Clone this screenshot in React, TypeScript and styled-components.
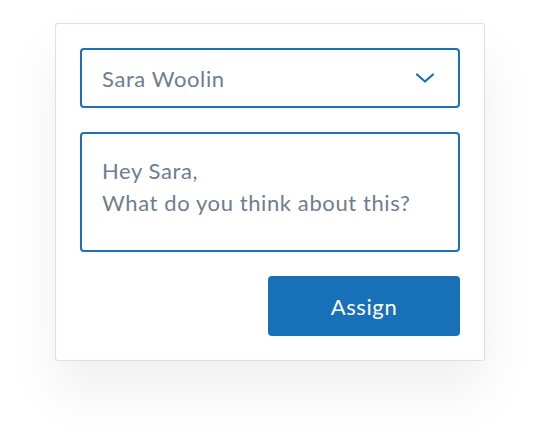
import { ReactElement } from 'react';
import styled, { createGlobalStyle } from 'styled-components';

const blue = '#1a6fb6';
const textGrey = '#6e7d90';

const GlobalStyle = createGlobalStyle`
  html, body {
    margin: 0;
    padding: 0;
    background: #ffffff;
  }
  body {
    font-family: Lato, 'Open Sans', sans-serif;
  }
`;

const Page = styled.div`
  width: 540px;
  height: 448px;
  padding: 23px 0 0 55px;
  box-sizing: border-box;
`;

const Card = styled.div`
  width: 430px;
  box-sizing: border-box;
  padding: 24px;
  display: flex;
  flex-direction: column;
  gap: 24px;
  background: #ffffff;
  border: 1px solid #e9d8e9;
  border-radius: 3px;
  box-shadow: 0 30px 55px rgba(0, 0, 0, 0.065);
`;

const Select = styled.div`
  height: 60px;
  box-sizing: border-box;
  border: 2px solid ${blue};
  border-radius: 4px;
  display: flex;
  align-items: center;
  justify-content: space-between;
  padding: 0 24px 0 20px;
  color: ${textGrey};
  font-size: 22px;
  letter-spacing: 0.6px;
`;

const Message = styled.div`
  height: 120px;
  box-sizing: border-box;
  border: 2px solid ${blue};
  border-radius: 4px;
  padding: 21px 20px;
  color: ${textGrey};
  font-size: 22px;
  line-height: 32px;
  letter-spacing: 0.6px;
`;

const Actions = styled.div`
  display: flex;
  justify-content: flex-end;
`;

const Button = styled.button`
  width: 192px;
  height: 60px;
  border: none;
  border-radius: 4px;
  background: #1870b8;
  color: #ffffff;
  font-family: inherit;
  font-size: 22px;
  letter-spacing: 0.6px;
`;

function Chevron(): ReactElement {
  return (
    <svg width="18" height="10" viewBox="0 0 18 10" fill="none">
      <path d="M1 1.5 L9 8.5 L17 1.5" stroke={blue} strokeWidth="2.2" strokeLinecap="round" strokeLinejoin="round" />
    </svg>
  );
}

function App(): ReactElement {
  return (
    <Page>
      <GlobalStyle />
      <Card>
        <Select>
          <span>Sara Woolin</span>
          <Chevron />
        </Select>
        <Message>
          Hey Sara,
          <br />
          What do you think about this?
        </Message>
        <Actions>
          <Button>Assign</Button>
        </Actions>
      </Card>
    </Page>
  );
}

export default App;
